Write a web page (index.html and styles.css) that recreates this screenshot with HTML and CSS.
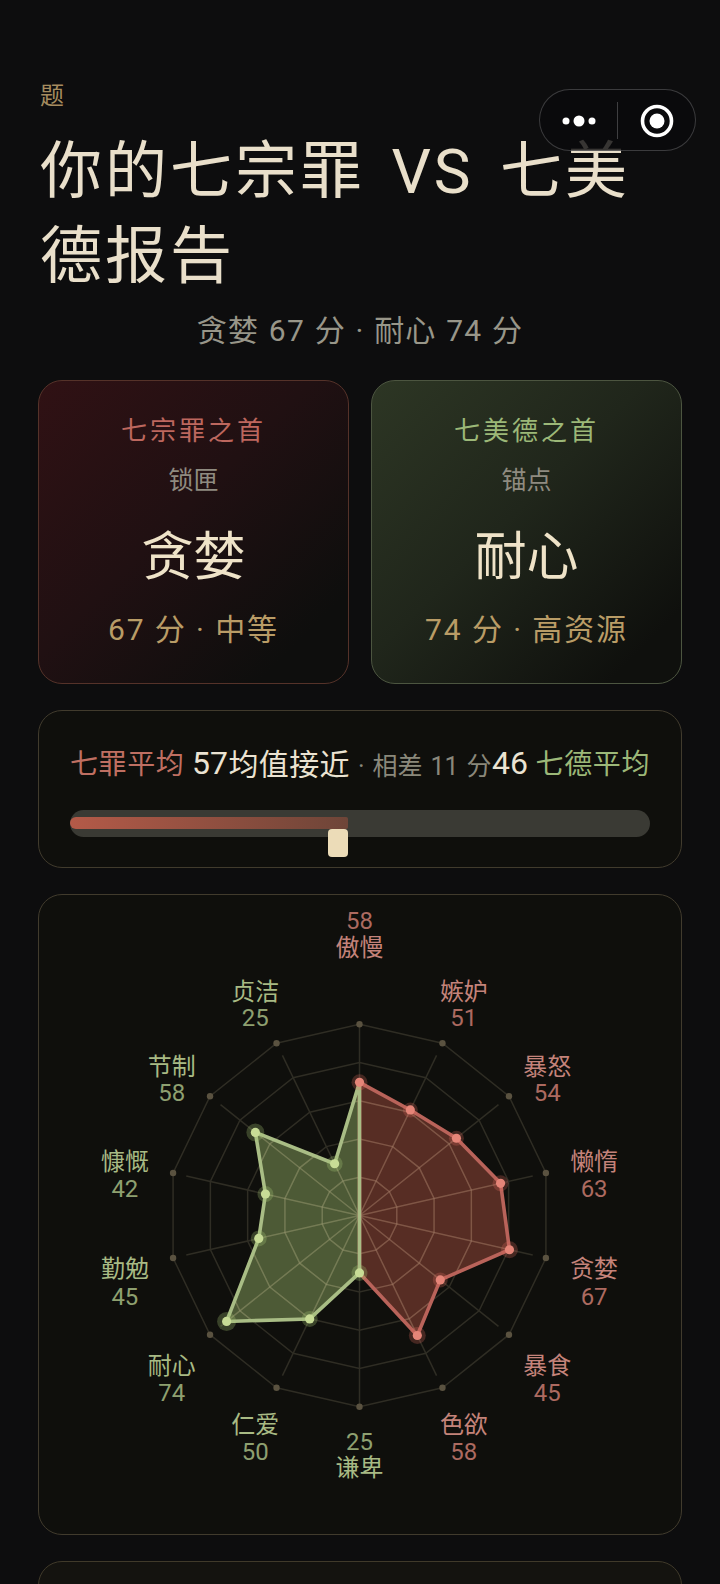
FILE: index.html
```html
<!DOCTYPE html>
<html lang="zh">
<head>
<meta charset="utf-8">
<title>你的七宗罪 VS 七美德报告</title>
<link rel="stylesheet" href="styles.css">
</head>
<body>
<div class="capsule">
  <svg class="capsule-dots" viewBox="0 0 40 14"><circle cx="6" cy="7" r="3.5"/><circle cx="19" cy="7" r="5.5"/><circle cx="32" cy="7" r="3.5"/></svg>
  <span class="capsule-line"></span>
  <svg class="capsule-target" viewBox="0 0 36 36"><circle class="target-ring" cx="18" cy="18" r="14.5"/><circle cx="18" cy="18" r="7.5"/></svg>
</div>
<main class="page">
  <header class="head">
    <div class="eyebrow">题</div>
    <h1 class="title">你的七宗罪 VS 七美德报告</h1>
    <p class="subtitle">贪婪 67 分 · 耐心 74 分</p>
  </header>

  <section class="duo">
    <div class="lead lead-sin">
      <div class="lead-kicker">七宗罪之首</div>
      <div class="lead-tag">锁匣</div>
      <div class="lead-name">贪婪</div>
      <div class="lead-score">67 分 · 中等</div>
    </div>
    <div class="lead lead-virtue">
      <div class="lead-kicker">七美德之首</div>
      <div class="lead-tag">锚点</div>
      <div class="lead-name">耐心</div>
      <div class="lead-score">74 分 · 高资源</div>
    </div>
  </section>

  <section class="card balance">
    <div class="balance-row">
      <span class="avg-label sin">七罪平均 <b>57</b></span>
      <span class="balance-mid"><b>均值接近</b><i> · 相差 11 分</i></span>
      <span class="avg-label virtue"><b>46</b> 七德平均</span>
    </div>
    <div class="track">
      <div class="track-fill"></div>
      <div class="track-thumb"></div>
    </div>
  </section>

  <section class="card radar-card">
    <svg class="radar" viewBox="-321 -321 642 638">
      <defs>
        <polygon id="ring" points="0,-191.5 83.1,-172.5 149.7,-119.4 186.7,-42.6 186.7,42.6 149.7,119.4 83.1,172.5 0,191.5 -83.1,172.5 -149.7,119.4 -186.7,42.6 -186.7,-42.6 -149.7,-119.4 -83.1,-172.5"/>
        <g id="grid">
          <g class="rings">
            <use href="#ring"/>
            <use href="#ring" transform="scale(.8)"/>
            <use href="#ring" transform="scale(.6)"/>
            <use href="#ring" transform="scale(.4)"/>
            <use href="#ring" transform="scale(.2)"/>
          </g>
          <g class="spokes">
            <line x1="0" y1="-191.5" x2="0" y2="191.5"/>
            <line x2="77.2" y2="-160.4"/><line x2="139.2" y2="-111"/><line x2="173.5" y2="-39.6"/>
            <line x2="173.5" y2="39.6"/><line x2="139.2" y2="111"/><line x2="77.2" y2="160.4"/>
            <line x2="-77.2" y2="160.4"/><line x2="-139.2" y2="111"/><line x2="-173.5" y2="39.6"/>
            <line x2="-173.5" y2="-39.6"/><line x2="-139.2" y2="-111"/><line x2="-77.2" y2="-160.4"/>
          </g>
        </g>
        <clipPath id="area-clip">
          <polygon points="0,-133.4 50.9,-105.7 97.1,-77.4 141.3,-32.2 150.2,34.3 80.9,64.5 57.9,120.2 0,57.5"/>
          <polygon points="0,57.5 -49.9,103.6 -133.1,106.1 -100.9,23 -94.2,-21.5 -104.3,-83.2 -24.9,-51.8 0,-133.4"/>
        </clipPath>
      </defs>
      <use href="#grid" class="grid-base"/>
      <g class="tips">
        <circle cx="0" cy="-191.5" r="3.2"/><circle cx="83.1" cy="-172.5" r="3.2"/><circle cx="149.7" cy="-119.4" r="3.2"/><circle cx="186.7" cy="-42.6" r="3.2"/><circle cx="186.7" cy="42.6" r="3.2"/><circle cx="149.7" cy="119.4" r="3.2"/><circle cx="83.1" cy="172.5" r="3.2"/><circle cx="0" cy="191.5" r="3.2"/><circle cx="-83.1" cy="172.5" r="3.2"/><circle cx="-149.7" cy="119.4" r="3.2"/><circle cx="-186.7" cy="42.6" r="3.2"/><circle cx="-186.7" cy="-42.6" r="3.2"/><circle cx="-149.7" cy="-119.4" r="3.2"/><circle cx="-83.1" cy="-172.5" r="3.2"/>
      </g>
      <polygon class="fill-sin" points="0,-133.4 50.9,-105.7 97.1,-77.4 141.3,-32.2 150.2,34.3 80.9,64.5 57.9,120.2 0,57.5"/>
      <polygon class="fill-virtue" points="0,57.5 -49.9,103.6 -133.1,106.1 -100.9,23 -94.2,-21.5 -104.3,-83.2 -24.9,-51.8 0,-133.4"/>
      <g clip-path="url(#area-clip)"><use href="#grid" class="grid-lit"/></g>
      <polygon class="edge-sin" points="0,-133.4 50.9,-105.7 97.1,-77.4 141.3,-32.2 150.2,34.3 80.9,64.5 57.9,120.2 0,57.5"/>
      <polygon class="edge-virtue" points="0,57.5 -49.9,103.6 -133.1,106.1 -100.9,23 -94.2,-21.5 -104.3,-83.2 -24.9,-51.8 0,-133.4"/>
      <g class="halo-sin">
        <circle cx="0" cy="-133.4" r="8"/><circle cx="50.9" cy="-105.7" r="7.5"/><circle cx="97.1" cy="-77.4" r="7.5"/><circle cx="141.3" cy="-32.2" r="8"/><circle cx="150.2" cy="34.3" r="8.5"/><circle cx="80.9" cy="64.5" r="7.5"/><circle cx="57.9" cy="120.2" r="8.5"/>
      </g>
      <g class="dot-sin">
        <circle cx="0" cy="-133.4" r="4.6"/><circle cx="50.9" cy="-105.7" r="4.6"/><circle cx="97.1" cy="-77.4" r="4.6"/><circle cx="141.3" cy="-32.2" r="4.6"/><circle cx="150.2" cy="34.3" r="4.6"/><circle cx="80.9" cy="64.5" r="4.6"/><circle cx="57.9" cy="120.2" r="4.6"/>
      </g>
      <g class="halo-virtue">
        <circle cx="0" cy="57.5" r="8"/><circle cx="-49.9" cy="103.6" r="8"/><circle cx="-133.1" cy="106.1" r="9.5"/><circle cx="-100.9" cy="23" r="8"/><circle cx="-94.2" cy="-21.5" r="8"/><circle cx="-104.3" cy="-83.2" r="9"/><circle cx="-24.9" cy="-51.8" r="8"/>
      </g>
      <g class="dot-virtue">
        <circle cx="0" cy="57.5" r="4.6"/><circle cx="-49.9" cy="103.6" r="4.6"/><circle cx="-133.1" cy="106.1" r="4.6"/><circle cx="-100.9" cy="23" r="4.6"/><circle cx="-94.2" cy="-21.5" r="4.6"/><circle cx="-104.3" cy="-83.2" r="4.6"/><circle cx="-24.9" cy="-51.8" r="4.6"/>
      </g>
      <g class="labels">
        <g class="lab-sin">
          <text class="val" y="-295">58</text><text x="0" y="-268">傲慢</text>
          <text x="104.5" y="-224">嫉妒</text><text class="val" x="104.5" y="-198">51</text>
          <text x="188" y="-149">暴怒</text><text class="val" x="188" y="-123">54</text>
          <text x="235" y="-54">懒惰</text><text class="val" x="235" y="-27">63</text>
          <text x="235" y="54">贪婪</text><text class="val" x="235" y="82">67</text>
          <text x="188" y="151">暴食</text><text class="val" x="188" y="178">45</text>
          <text x="104.5" y="210">色欲</text><text class="val" x="104.5" y="237">58</text>
        </g>
        <g class="lab-virtue">
          <text class="val" y="227">25</text><text y="253">谦卑</text>
          <text x="-104.5" y="210">仁爱</text><text class="val" x="-104.5" y="237">50</text>
          <text x="-188" y="151">耐心</text><text class="val" x="-188" y="178">74</text>
          <text x="-235" y="54">勤勉</text><text class="val" x="-235" y="82">45</text>
          <text x="-235" y="-54">慷慨</text><text class="val" x="-235" y="-27">42</text>
          <text x="-188" y="-149">节制</text><text class="val" x="-188" y="-123">58</text>
          <text x="-104.5" y="-224">贞洁</text><text class="val" x="-104.5" y="-198">25</text>
        </g>
      </g>
    </svg>
  </section>

  <section class="card next-card"></section>
</main>
</body>
</html>
```
FILE: styles.css
```css
* { box-sizing: border-box; margin: 0; padding: 0; }
html, body { width: 720px; height: 1584px; overflow: hidden; background: #0d0d0e; }
body { font-family: Roboto, "Noto Sans CJK SC", sans-serif; color: #e9dfca; position: relative; }

.page { padding: 79px 38px 0; display: flex; flex-direction: column; gap: 26px; }

.capsule {
  position: absolute; left: 539px; top: 89px; width: 157px; height: 62px; z-index: 5;
  border-radius: 31px; border: 1.5px solid rgba(255,255,255,.2); background: rgba(10,10,12,.8);
}
.capsule-dots { position: absolute; left: 20px; top: 24px; width: 40px; height: 14px; fill: #fff; }
.capsule-line { position: absolute; left: 77px; top: 12px; width: 1px; height: 37px; background: rgba(255,255,255,.22); }
.capsule-target { position: absolute; left: 99px; top: 13px; width: 36px; height: 36px; fill: #fff; }
.target-ring { fill: none; stroke: #fff; stroke-width: 3.6; }

.head { display: flex; flex-direction: column; }
.eyebrow { font-size: 24px; line-height: 34px; color: #a58c5f; margin-left: 2px; }
.title { font-size: 62px; font-weight: 400; line-height: 85px; letter-spacing: 3px; word-spacing: 8px; color: #e9dfca; margin: 16px 0 0 2px; }
.subtitle { font-size: 30px; line-height: 40px; letter-spacing: 1.2px; word-spacing: 1px; color: #989689; text-align: center; margin-top: 12px; }

.duo { display: grid; grid-template-columns: 311px 311px; gap: 22px; margin-top: 3px; }
.lead { height: 304px; border-radius: 24px; border: 1.5px solid; display: flex; flex-direction: column; align-items: center; padding-top: 31px; }
.lead-sin { background: linear-gradient(135deg, #301114 0%, #201012 45%, #0e0e0d 85%); border-color: #553229; }
.lead-virtue { background: linear-gradient(135deg, #2d3624 0%, #20261b 45%, #0f100d 88%); border-color: #4c5540; }
.lead-kicker { font-size: 26px; line-height: 38px; letter-spacing: 3px; }
.lead-sin .lead-kicker { color: #bd675e; }
.lead-virtue .lead-kicker { color: #9cb878; }
.lead-tag { font-size: 25px; line-height: 36px; color: #8f8b80; margin-top: 13px; }
.lead-name { font-size: 52px; line-height: 72px; color: #efe3c8; margin-top: 23px; }
.lead-score { font-size: 30px; line-height: 42px; letter-spacing: 1.9px; color: #b99c66; margin-top: 15px; }

.card { background: #0f0f0c; border: 1.5px solid #413b2d; border-radius: 24px; }
.balance { height: 158px; padding: 31px 31px 0; }
.balance-row { display: flex; justify-content: space-between; align-items: center; height: 40px; white-space: nowrap; }
.avg-label { font-size: 28px; letter-spacing: .6px; }
.avg-label b { font-size: 32px; font-weight: 400; color: #ebe3d2; letter-spacing: 0; }
.balance-mid b { font-size: 30px; font-weight: 400; color: #ebe3d2; letter-spacing: .4px; }
.sin { color: #bf6f62; }
.virtue { color: #9cb878; }
.balance-mid i { font-style: normal; font-size: 25px; word-spacing: 1.8px; color: #8a887b; }
.track { position: relative; height: 27px; border-radius: 14px; background: #3a3a34; margin-top: 28px; }
.track-fill { position: absolute; left: 0; top: 7px; width: 278px; height: 12px; border-radius: 6px 2px 2px 6px; background: linear-gradient(90deg, #b45a48, #6e4538); }
.track-thumb { position: absolute; left: 258px; top: 19px; width: 20px; height: 28px; border-radius: 4px; background: #ecdcb8; }

.radar-card { height: 641px; }
.radar { display: block; width: 641px; height: 637px; }
#ring { fill: none; vector-effect: non-scaling-stroke; stroke-width: 1.5; }
.spokes line { stroke-width: 1.5; }
.grid-base { stroke: #2f2d24; }
.grid-lit { stroke: rgba(255,225,190,.14); }
.tips circle { fill: #5a5240; }
.fill-sin { fill: rgba(195,90,72,.4); }
.fill-virtue { fill: rgba(150,178,105,.46); }
.edge-sin { fill: none; stroke: #b9635a; stroke-width: 3.6; stroke-linejoin: round; }
.edge-virtue { fill: none; stroke: #a9bd85; stroke-width: 3.6; stroke-linejoin: round; }
.halo-sin circle { fill: rgba(225,110,95,.26); }
.dot-sin circle { fill: #e58578; }
.halo-virtue circle { fill: rgba(170,200,120,.28); }
.dot-virtue circle { fill: #c8dc96; }
.labels text { font-size: 24px; text-anchor: middle; dominant-baseline: central; }
.lab-sin text { fill: #c4837a; }
.lab-sin .val { fill: #ac6a60; }
.lab-virtue text { fill: #a8ba84; }
.lab-virtue .val { fill: #8ea070; }

.next-card { height: 220px; background: #14130f; border-color: #403a2a; }
```
